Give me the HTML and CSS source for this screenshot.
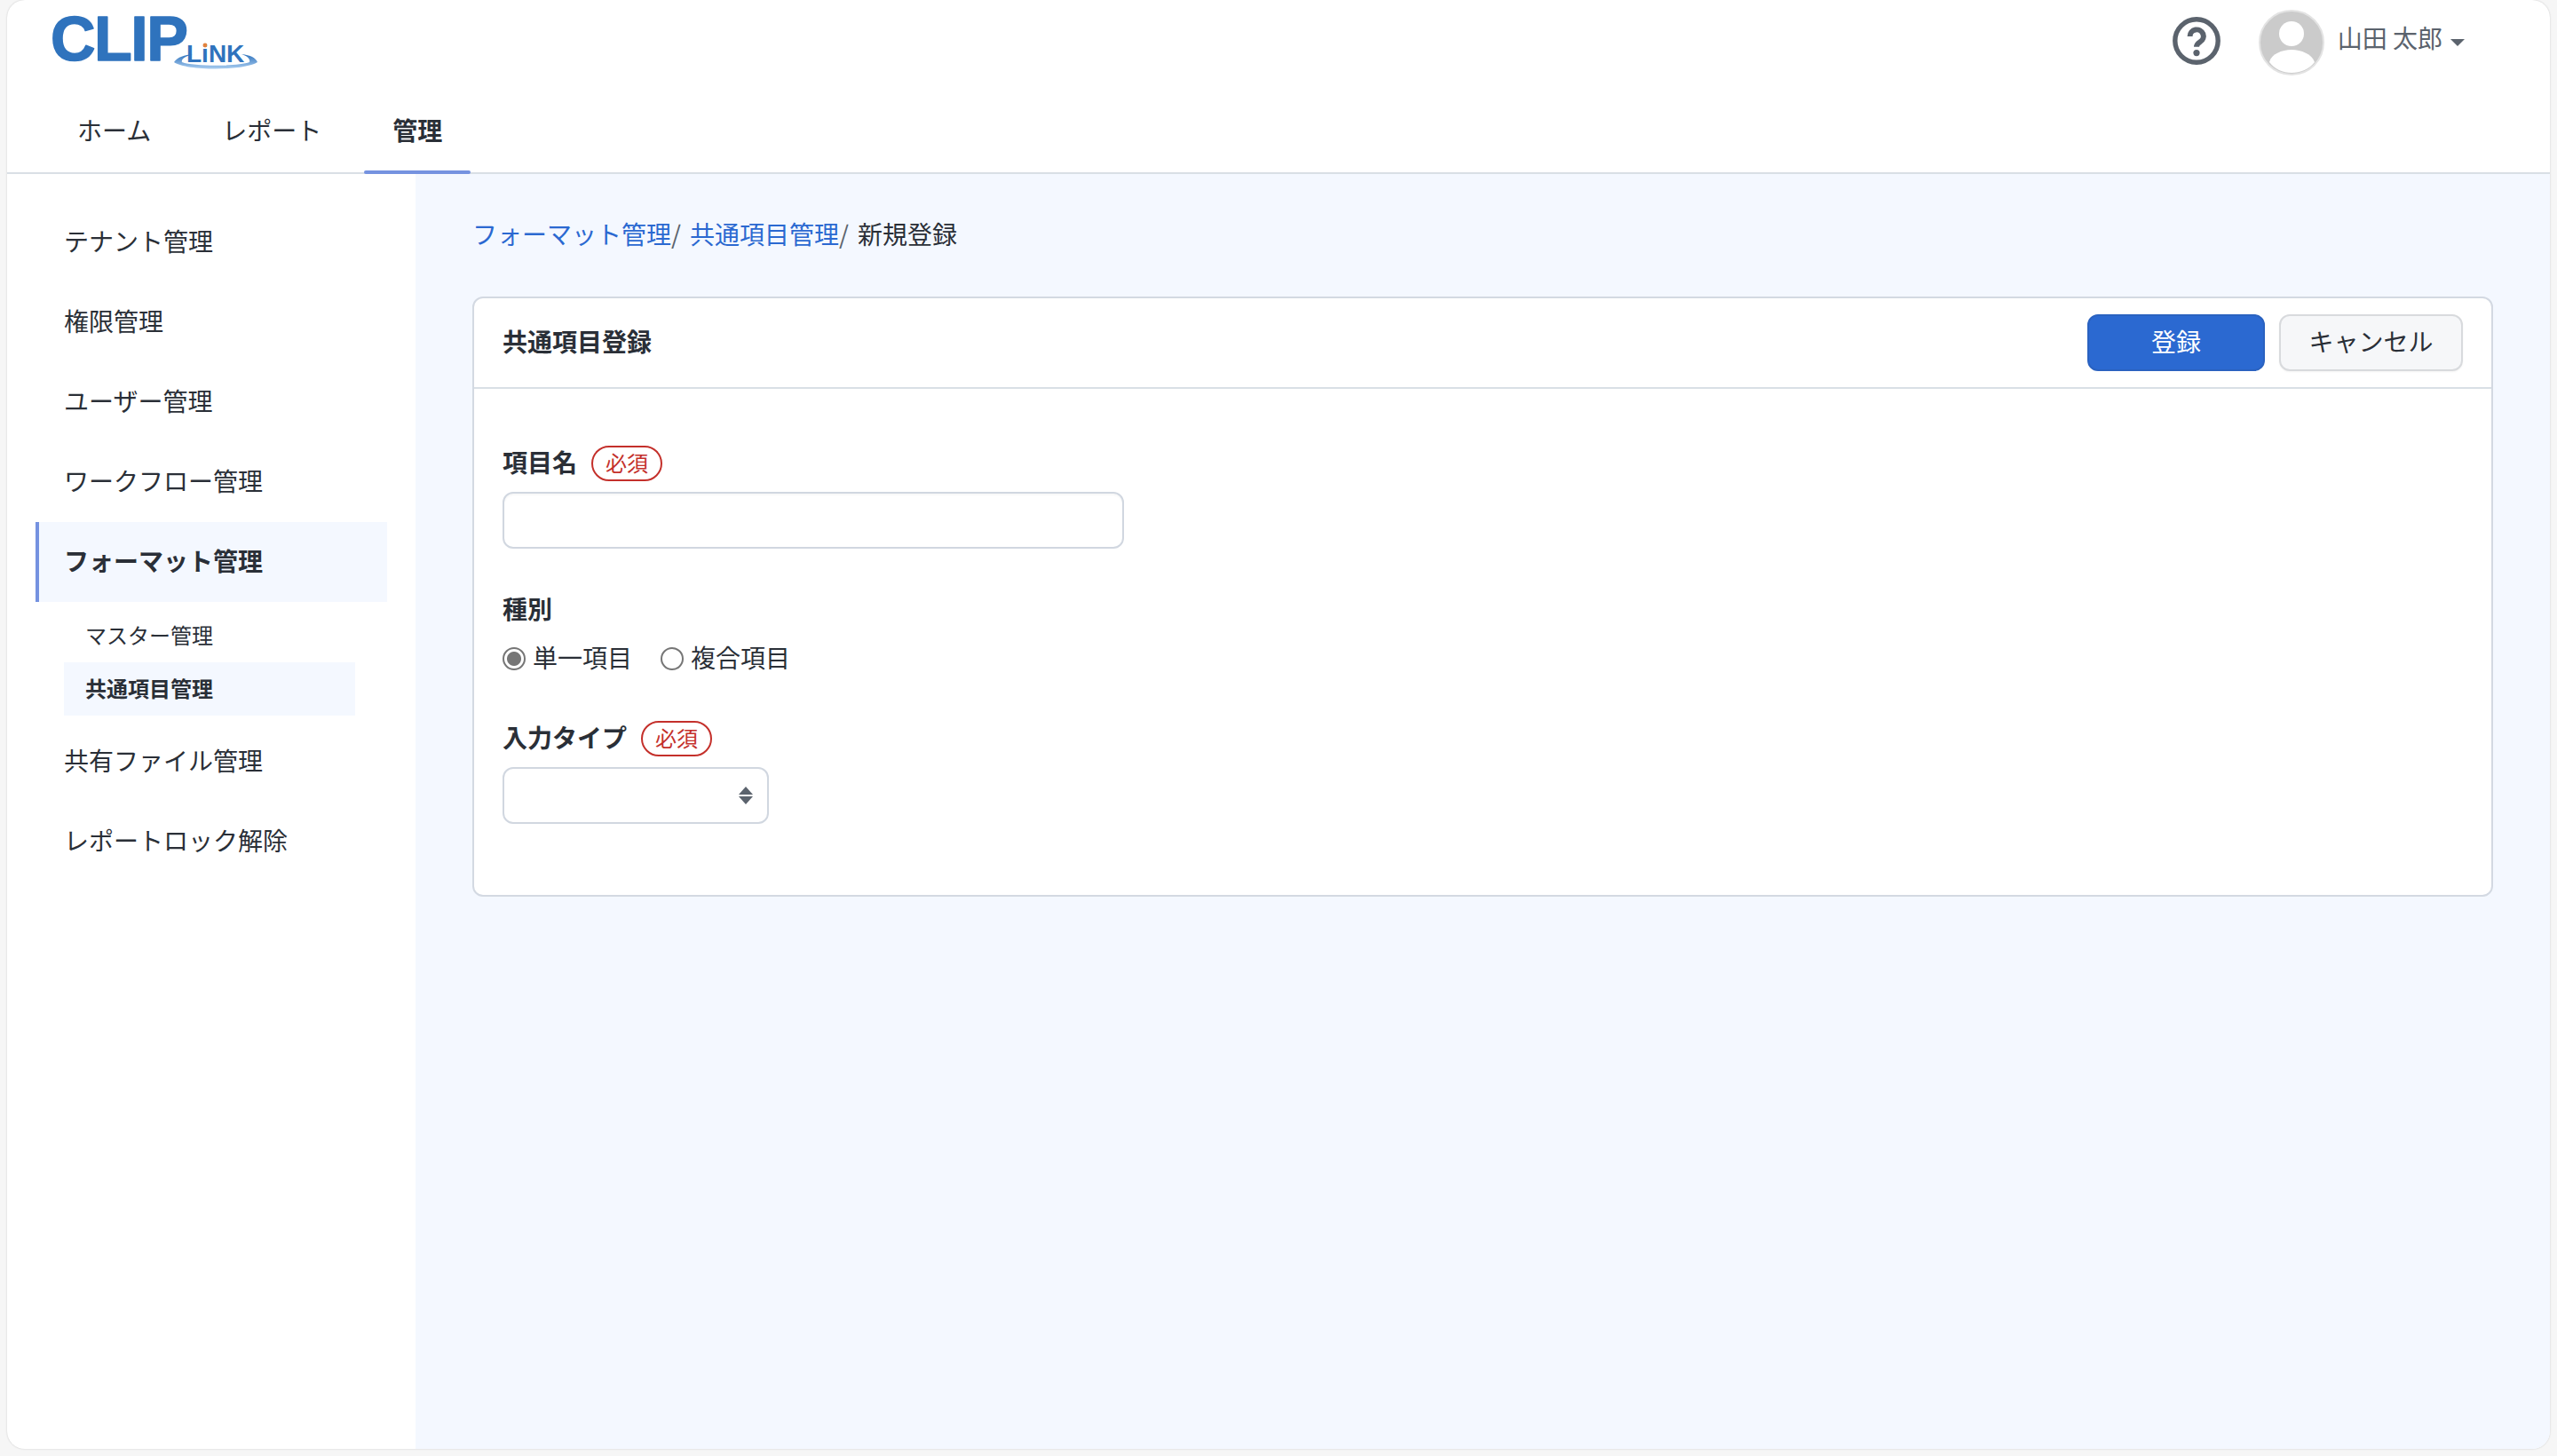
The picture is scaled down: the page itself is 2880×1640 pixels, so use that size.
FILE: index.html
```html
<!DOCTYPE html>
<html lang="ja">
<head>
<meta charset="utf-8">
<title>共通項目登録</title>
<link rel="stylesheet" href="styles.css">
</head>
<body>
<div class="window">
  <header class="header">
    <div class="topbar">
      <svg class="logo" viewBox="0 0 260 90" width="260" height="90" aria-label="CLIP LiNK">
        <defs>
          <linearGradient id="swoosh" x1="0" x2="0" y1="0" y2="1">
            <stop offset="0" stop-color="#2f73bd"/>
            <stop offset="1" stop-color="#a9cdf0"/>
          </linearGradient>
        </defs>
        <text class="logo-main" x="7" y="68">CLIP</text>
        <path class="logo-swoosh" d="M146 70 C150 64 158 62 167 61 C157 64 154 67 155 70 C168 75 218 75 231 70 C232 66 228 63 222 61 C232 62 238 65 240 70 C225 80 160 80 146 70 Z"/>
        <text class="logo-sub" x="160" y="70">LiNK</text>
        <circle class="logo-dot" cx="181" cy="51" r="2.4"/>
      </svg>
      <div class="account">
        <svg class="help" viewBox="0 0 54 54" width="54" height="54" aria-label="ヘルプ">
          <circle class="help-ring" cx="27" cy="27" r="24.2"/>
          <path class="help-hook" d="M19.6 22 a7.6 7.4 0 1 1 11.4 6.2 c-2.8 1.8 -4 2.8 -4 5.6"/>
          <circle class="help-dot" cx="27" cy="40.6" r="3.6"/>
        </svg>
        <svg class="avatar" viewBox="0 0 74 74" width="74" height="74" aria-label="ユーザー">
          <circle class="avatar-bg" cx="37" cy="37" r="36"/>
          <circle class="avatar-fg" cx="37" cy="27" r="14"/>
          <path class="avatar-fg" d="M12 59 C14 50 26 45 37 45 C48 45 60 50 63 59 C57 67 47 71 37 71 C27 71 18 67 12 59 Z"/>
        </svg>
        <span class="user-name">山田 太郎</span>
        <span class="caret"></span>
      </div>
    </div>
    <nav class="tabs">
      <a class="tab">ホーム</a>
      <a class="tab">レポート</a>
      <a class="tab tab-active">管理</a>
    </nav>
  </header>
  <div class="body">
    <aside class="sidebar">
      <a class="side-item">テナント管理</a>
      <a class="side-item">権限管理</a>
      <a class="side-item">ユーザー管理</a>
      <a class="side-item">ワークフロー管理</a>
      <a class="side-item side-active">フォーマット管理</a>
      <div class="sub-list">
        <a class="sub-item">マスター管理</a>
        <a class="sub-item sub-active">共通項目管理</a>
      </div>
      <a class="side-item">共有ファイル管理</a>
      <a class="side-item">レポートロック解除</a>
    </aside>
    <main class="main">
      <div class="crumbs">
        <a class="crumb-link">フォーマット管理</a><span class="crumb-sep">/</span>
        <a class="crumb-link">共通項目管理</a><span class="crumb-sep">/</span>
        <span class="crumb-current">新規登録</span>
      </div>
      <section class="card">
        <div class="card-head">
          <h1 class="card-title">共通項目登録</h1>
          <div class="actions">
            <button class="btn btn-primary" type="button">登録</button>
            <button class="btn btn-light" type="button">キャンセル</button>
          </div>
        </div>
        <form class="card-body">
          <div class="group">
            <div class="label-row"><label class="label">項目名</label><span class="badge">必須</span></div>
            <input class="text-input" type="text">
          </div>
          <div class="group">
            <div class="label-row label-plain"><label class="label">種別</label></div>
            <div class="radios">
              <label class="radio"><input class="radio-input" type="radio" name="kind" checked><span class="radio-text">単一項目</span></label>
              <label class="radio"><input class="radio-input" type="radio" name="kind"><span class="radio-text">複合項目</span></label>
            </div>
          </div>
          <div class="group">
            <div class="label-row"><label class="label">入力タイプ</label><span class="badge">必須</span></div>
            <div class="select">
              <span class="select-up"></span>
              <span class="select-down"></span>
            </div>
          </div>
        </form>
      </section>
    </main>
  </div>
</div>
</body>
</html>
```
FILE: styles.css
```css
* { box-sizing: border-box; }
html, body { margin: 0; height: 1640px; overflow: hidden; }
body {
  background: #f6f6f6;
  color: #2a2f37;
  font-family: "Noto Sans CJK JP", "Noto Sans", sans-serif;
  font-size: 28px;
  line-height: 42px;
}
.window {
  width: 2864px;
  height: 1632px;
  margin-left: 8px;
  background: #fff;
  border-radius: 20px;
  box-shadow: 0 0 2px #c4c4c4;
  overflow: hidden;
  display: flex;
  flex-direction: column;
}
.header {
  height: 196px;
  flex: none;
  border-bottom: 2px solid #d9dfe5;
  display: flex;
  flex-direction: column;
}
.topbar {
  height: 96px;
  flex: none;
  padding: 0 96px 0 42px;
  display: flex;
  justify-content: space-between;
  align-items: flex-start;
}
.logo { display: block; }
.logo-main {
  font-family: "Liberation Sans", Arial, sans-serif;
  font-weight: 700;
  font-size: 70px;
  letter-spacing: -1.5px;
  fill: #2f73bd;
  stroke: #2f73bd;
  stroke-width: 1.5;
  stroke-linejoin: round;
}
.logo-sub {
  font-family: "Liberation Sans", Arial, sans-serif;
  font-weight: 700;
  font-size: 28px;
  fill: #2f73bd;
}
.logo-swoosh { fill: url(#swoosh); }
.logo-dot { fill: #e2823c; }
.account {
  display: flex;
  align-items: flex-start;
  color: #5b636d;
}
.help { display: block; margin: 19px 43px 0 0; }
.help-ring { fill: none; stroke: #5b636d; stroke-width: 5.4; }
.help-hook { fill: none; stroke: #5b636d; stroke-width: 6; }
.help-dot { fill: #5b636d; }
.avatar { display: block; margin: 11px 15px 0 0; }
.avatar-bg { fill: #cbcbcb; stroke: #e3e3e3; stroke-width: 2; }
.avatar-fg { fill: #fff; }
.user-name { margin-top: 21px; white-space: nowrap; }
.caret {
  margin: 44px 0 0 9px;
  width: 0;
  height: 0;
  border-left: 8px solid transparent;
  border-right: 8px solid transparent;
  border-top: 8px solid #5b636d;
}
.tabs {
  flex: none;
  height: 98px;
  padding-left: 47px;
  display: flex;
  gap: 16px;
}
.tab {
  position: relative;
  padding: 0 32px;
  height: 100px;
  display: flex;
  align-items: center;
}
.tab-active { font-weight: 700; }
.tab-active::after {
  content: "";
  position: absolute;
  left: 0;
  right: 0;
  bottom: 0;
  height: 4px;
  border-radius: 2px;
  background: #7592e0;
}
.body { flex: 1; display: flex; min-height: 0; }
.sidebar {
  width: 460px;
  flex: none;
  padding: 32px;
  display: flex;
  flex-direction: column;
}
.side-item {
  height: 90px;
  flex: none;
  padding: 0 0 4px 32px;
  display: flex;
  align-items: center;
}
.side-active {
  background: #f4f8ff;
  border-left: 4px solid #7592e0;
  padding-left: 28px;
  font-weight: 700;
}
.sub-list {
  margin: 8px 0 7px 32px;
  width: 328px;
  font-size: 24px;
}
.sub-item {
  height: 60px;
  padding: 0 0 3px 24px;
  display: flex;
  align-items: center;
}
.sub-active { background: #f4f8ff; font-weight: 700; }
.main {
  flex: 1;
  min-width: 0;
  background: #f4f8ff;
  padding: 46px 64px 48px;
}
.crumbs { height: 42px; margin-bottom: 50px; display: flex; white-space: pre; }
.crumb-link { color: #2b69d1; }
.crumb-sep { margin-right: 10px; color: #5b636d; }
.crumb-current { color: #2a2f37; }
.card {
  background: #fff;
  border: 2px solid #d3d9e2;
  border-radius: 12px;
}
.card-head {
  height: 102px;
  padding: 0 32px;
  border-bottom: 2px solid #d9dfe5;
  display: flex;
  align-items: center;
  justify-content: space-between;
}
.card-title { margin: 0 0 4px; font-size: 28px; font-weight: 700; }
.actions { display: flex; gap: 16px; }
.btn {
  height: 64px;
  border-radius: 12px;
  font: inherit;
  padding: 0 0 4px;
}
.btn-primary {
  width: 200px;
  color: #fff;
  background: #2b69d1;
  border: 2px solid #2a62c0;
}
.btn-light {
  width: 207px;
  color: #2a2f37;
  background: #f6f7f9;
  border: 2px solid #d8dadd;
  box-shadow: 0 1px 2px rgba(0, 0, 0, 0.05);
}
.card-body {
  padding: 64px 32px 80px;
  display: flex;
  flex-direction: column;
  gap: 48px;
}
.label-row {
  height: 40px;
  margin-bottom: 12px;
  display: flex;
  align-items: center;
  gap: 16px;
}
.label-plain { height: 42px; }
.label { font-weight: 700; margin-bottom: 5px; }
.badge {
  height: 40px;
  width: 80px;
  border: 2px solid #c4302b;
  border-radius: 20px;
  color: #c4302b;
  font-size: 24px;
  line-height: 34px;
  text-align: center;
}
.text-input {
  display: block;
  width: 700px;
  height: 64px;
  background: #fff;
  border: 2px solid #d1d7e0;
  border-radius: 12px;
  box-shadow: inset 0 2px 2px rgba(0, 0, 0, 0.03);
}
.radios { height: 44px; display: flex; gap: 32px; }
.radio { display: flex; align-items: center; gap: 8px; }
.radio-text { margin-bottom: 5px; }
.radio-input {
  appearance: none;
  margin: 0;
  width: 26px;
  height: 26px;
  border: 2px solid #767676;
  border-radius: 50%;
  background: #fff;
}
.radio-input:checked {
  background: radial-gradient(circle, #767676 0 7.5px, #fff 8.5px);
}
.select {
  width: 300px;
  height: 64px;
  background: #fff;
  border: 2px solid #d1d7e0;
  border-radius: 12px;
  padding-right: 16px;
  display: flex;
  flex-direction: column;
  justify-content: center;
  align-items: flex-end;
  gap: 2px;
}
.select-up, .select-down {
  width: 0;
  height: 0;
  border-left: 8px solid transparent;
  border-right: 8px solid transparent;
}
.select-up { border-bottom: 9px solid #5b636d; }
.select-down { border-top: 9px solid #5b636d; }
```
